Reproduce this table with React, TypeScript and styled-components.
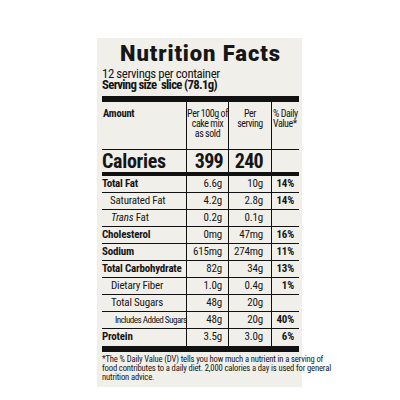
import styled, { createGlobalStyle } from "styled-components";

const Global = createGlobalStyle`
  body {
    margin: 0;
    background: #ffffff;
  }
`;

const COLS = "84px 42px 43px 28px";

const Page = styled.div`
  width: 400px;
  height: 400px;
  box-sizing: border-box;
  padding: 38px 0 0 97px;
  display: flex;
  align-items: flex-start;
`;

const Panel = styled.div`
  width: 205px;
  height: 349px;
  box-sizing: border-box;
  padding: 5px 3px 0 5px;
  background: #f1efea;
  color: #161616;
  font-family: "Roboto Condensed", "Liberation Sans", sans-serif;
  display: flex;
  flex-direction: column;
`;

const Title = styled.h1`
  margin: 0;
  font-family: Roboto, "Liberation Sans", sans-serif;
  font-weight: 900;
  font-size: 22px;
  line-height: 22px;
  text-align: center;
  letter-spacing: 0.9px;
`;

const Servings = styled.div<{ $bold?: boolean }>`
  font-size: 12.8px;
  line-height: 11px;
  font-weight: ${(p) => (p.$bold ? 700 : 400)};
  letter-spacing: ${(p) => (p.$bold ? "-0.7px" : "-0.4px")};
  white-space: pre;
  &:first-of-type {
    margin-top: 3px;
  }
`;

const Table = styled.div`
  margin-top: 6px;
  border-top: 6px solid #111;
  border-bottom: 6px solid #111;
`;

const Row = styled.div<{ $height: number; $rule: number }>`
  display: grid;
  grid-template-columns: ${COLS};
  height: ${(p) => p.$height}px;
  box-sizing: border-box;
  border-bottom: ${(p) => p.$rule}px solid #111;
  &:last-child {
    border-bottom: none;
  }
`;

const HeadCell = styled.div<{ $align: "left" | "center"; $bold?: boolean }>`
  box-sizing: border-box;
  padding: 7px 0 0 ${(p) => (p.$align === "left" ? "1px" : "0")};
  font-size: ${(p) => (p.$bold ? "10.5px" : "10px")};
  line-height: 10px;
  letter-spacing: ${(p) => (p.$bold ? "-0.2px" : "-0.45px")};
  white-space: nowrap;
  font-weight: ${(p) => (p.$bold ? 700 : 400)};
  text-align: ${(p) => p.$align};
  & + & {
    border-left: 1px solid #111;
  }
`;

const Cell = styled.div<{ $pad?: number; $bold?: boolean }>`
  box-sizing: border-box;
  text-align: right;
  padding-right: ${(p) => p.$pad ?? 0}px;
  font-weight: ${(p) => (p.$bold ? 700 : 400)};
  white-space: nowrap;
  & + & {
    border-left: 1px solid #111;
  }
`;

const CalCell = styled(Cell)`
  font-size: 20px;
  line-height: 22px;
  font-weight: 700;
  letter-spacing: -0.7px;
`;

const CalLabel = styled(CalCell)`
  text-align: left;
  letter-spacing: -0.3px;
`;

const NutCell = styled(Cell)`
  font-size: 11px;
  line-height: 16px;
  letter-spacing: -0.2px;
`;

const Label = styled(NutCell)<{ $indent: number; $small?: boolean }>`
  text-align: left;
  padding-left: ${(p) => p.$indent}px;
  font-size: ${(p) => (p.$small ? "9.2px" : "11px")};
  letter-spacing: ${(p) => (p.$small ? "-0.55px" : "-0.2px")};
`;

const Footnote = styled.div`
  margin-top: 3px;
  font-size: 8.6px;
  line-height: 9px;
  letter-spacing: -0.15px;
  white-space: nowrap;
`;

type Nutrient = {
  name: React.ReactNode;
  per100: string;
  perServing: string;
  dv: string;
  bold?: boolean;
  indent?: number;
  small?: boolean;
};

const nutrients: Nutrient[] = [
  { name: "Total Fat", per100: "6.6g", perServing: "10g", dv: "14%", bold: true },
  { name: "Saturated Fat", per100: "4.2g", perServing: "2.8g", dv: "14%", indent: 8 },
  { name: <><i>Trans</i> Fat</>, per100: "0.2g", perServing: "0.1g", dv: "", indent: 9 },
  { name: "Cholesterol", per100: "0mg", perServing: "47mg", dv: "16%", bold: true },
  { name: "Sodium", per100: "615mg", perServing: "274mg", dv: "11%", bold: true },
  { name: "Total Carbohydrate", per100: "82g", perServing: "34g", dv: "13%", bold: true },
  { name: "Dietary Fiber", per100: "1.0g", perServing: "0.4g", dv: "1%", indent: 9 },
  { name: "Total Sugars", per100: "48g", perServing: "20g", dv: "", indent: 9 },
  { name: "Includes Added Sugars", per100: "48g", perServing: "20g", dv: "40%", indent: 13, small: true },
  { name: "Protein", per100: "3.5g", perServing: "3.0g", dv: "6%", bold: true },
];

export default function App() {
  return (
    <>
      <Global />
      <Page>
        <Panel>
          <Title>Nutrition Facts</Title>
          <Servings>12 servings per container</Servings>
          <Servings $bold>{"Serving size  slice (78.1g)"}</Servings>
          <Table>
            <Row $height={48} $rule={1}>
              <HeadCell $align="left" $bold>Amount</HeadCell>
              <HeadCell $align="center">
                Per 100g of
                <br />
                cake mix
                <br />
                as sold
              </HeadCell>
              <HeadCell $align="center">
                Per
                <br />
                serving
              </HeadCell>
              <HeadCell $align="left">
                % Daily
                <br />
                Value*
              </HeadCell>
            </Row>
            <Row $height={26} $rule={4}>
              <CalLabel>Calories</CalLabel>
              <CalCell $pad={5}>399</CalCell>
              <CalCell $pad={8}>240</CalCell>
              <CalCell />
            </Row>
            {nutrients.map((n, i) => (
              <Row key={i} $height={17} $rule={1}>
                <Label $indent={n.indent ?? 0} $bold={n.bold} $small={n.small}>
                  {n.name}
                </Label>
                <NutCell $pad={6}>{n.per100}</NutCell>
                <NutCell $pad={8}>{n.perServing}</NutCell>
                <NutCell $pad={5} $bold>
                  {n.dv}
                </NutCell>
              </Row>
            ))}
          </Table>
          <Footnote>
            *The % Daily Value (DV) tells you how much a nutrient in a serving of
            <br />
            food contributes to a daily diet. 2,000 calories a day is used for general
            <br />
            nutrition advice.
          </Footnote>
        </Panel>
      </Page>
    </>
  );
}
